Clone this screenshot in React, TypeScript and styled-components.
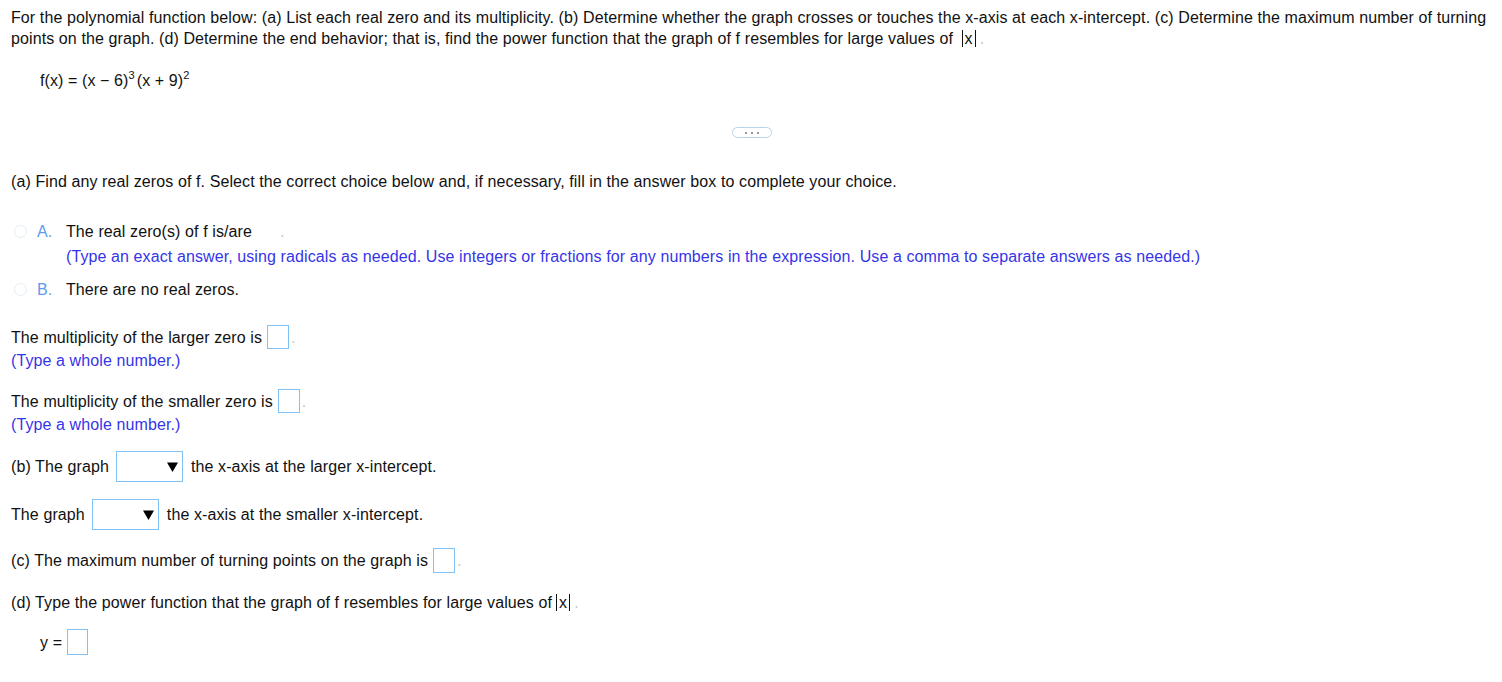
import styled, { createGlobalStyle } from "styled-components";

const GlobalStyle = createGlobalStyle`
  html, body {
    margin: 0;
    padding: 0;
    background: #fff;
  }
  body {
    font-family: "Liberation Sans", Arial, sans-serif;
    font-size: 16px;
    letter-spacing: 0.1px;
    color: #111;
  }
`;

const Page = styled.div`
  padding: 7px 11px 20px 11px;
  width: 1502px;
  box-sizing: border-box;
`;

const Intro = styled.p`
  margin: 0;
  line-height: 21px;
`;

const Row = styled.div<{ $mt: number; $indent?: number }>`
  display: flex;
  align-items: center;
  min-height: 21px;
  margin-top: ${(p) => p.$mt}px;
  padding-left: ${(p) => p.$indent ?? 0}px;
  line-height: 21px;
  white-space: nowrap;
`;

const Hint = styled(Row)`
  color: #3535e8;
`;

const Sup = styled.sup`
  font-size: 11px;
  line-height: 0;
  vertical-align: 7px;
  margin-right: 2px;
`;

const EllipsisRow = styled.div`
  display: flex;
  justify-content: center;
  margin-top: 36px;
`;

const EllipsisPill = styled.button`
  width: 40px;
  height: 11px;
  border: 1px solid #b9d3e8;
  border-radius: 6px;
  background: #fff;
  padding: 0;
  display: flex;
  align-items: center;
  justify-content: center;
  gap: 4px;
  margin-left: 2px;
`;

const Dot = styled.span`
  width: 2px;
  height: 2px;
  background: #9a9a9a;
`;

const Radio = styled.span`
  width: 11px;
  height: 11px;
  border: 1px solid #e3eef6;
  border-radius: 50%;
  margin-left: 3px;
  margin-right: 10px;
  flex: none;
`;

const Letter = styled.span`
  color: #5d9cf0;
  width: 29px;
`;

const AnswerBox = styled.span<{ $w?: number; $h?: number }>`
  display: inline-block;
  width: ${(p) => p.$w ?? 20}px;
  height: ${(p) => p.$h ?? 22}px;
  border: 1px solid #7fc0f5;
  margin-left: 5px;
  flex: none;
`;

const FaintDot = styled.span<{ $ml?: number }>`
  color: #c9c9a8;
  margin-left: ${(p) => p.$ml ?? 2}px;
`;

const Select = styled.span`
  display: inline-flex;
  align-items: center;
  justify-content: flex-end;
  box-sizing: border-box;
  width: 67px;
  height: 31px;
  border: 1px solid #7fc0f5;
  margin: 0 8px 0 7px;
  padding-right: 4px;
  flex: none;
`;

const Abs = styled.span`
  display: inline-block;
  border-left: 1px solid #111;
  border-right: 1px solid #111;
  padding: 0 2px;
  line-height: 17px;
  margin-left: 4px;
  margin-right: 2px;
`;

const Triangle = () => (
  <svg width="11" height="10" viewBox="0 0 11 10">
    <path d="M0 0.5 H11 L5.5 10 Z" fill="#000" />
  </svg>
);

export default function App() {
  return (
    <Page>
      <GlobalStyle />
      <Intro>
        For the polynomial function below: (a) List each real zero and its multiplicity. (b) Determine
        whether the graph crosses or touches the x-axis at each x-intercept. (c) Determine the maximum
        number of turning points on the graph. (d) Determine the end behavior; that is, find the power
        function that the graph of f resembles for large values of <Abs>x</Abs>
        <FaintDot>.</FaintDot>
      </Intro>

      <Row $mt={21} $indent={29}>
        <span>
          f(x) = (x − 6)<Sup>3</Sup>(x + 9)<Sup>2</Sup>
        </span>
      </Row>

      <EllipsisRow>
        <EllipsisPill aria-label="more">
          <Dot />
          <Dot />
          <Dot />
        </EllipsisPill>
      </EllipsisRow>

      <Row $mt={33}>
        (a) Find any real zeros of f. Select the correct choice below and, if necessary, fill in the
        answer box to complete your choice.
      </Row>

      <Row $mt={29}>
        <Radio />
        <Letter>A.</Letter>
        <span>The real zero(s) of f is/are</span>
        <FaintDot $ml={28}>.</FaintDot>
      </Row>
      <Hint $mt={4} $indent={55}>
        (Type an exact answer, using radicals as needed. Use integers or fractions for any numbers in
        the expression. Use a comma to separate answers as needed.)
      </Hint>

      <Row $mt={12}>
        <Radio />
        <Letter>B.</Letter>
        <span>There are no real zeros.</span>
      </Row>

      <Row $mt={25}>
        The multiplicity of the larger zero is
        <AnswerBox />
        <FaintDot>.</FaintDot>
      </Row>
      <Hint $mt={1}>(Type a whole number.)</Hint>

      <Row $mt={18}>
        The multiplicity of the smaller zero is
        <AnswerBox />
        <FaintDot>.</FaintDot>
      </Row>
      <Hint $mt={1}>(Type a whole number.)</Hint>

      <Row $mt={16}>
        (b) The graph
        <Select>
          <Triangle />
        </Select>
        the x-axis at the larger x-intercept.
      </Row>

      <Row $mt={17}>
        The graph
        <Select>
          <Triangle />
        </Select>
        the x-axis at the smaller x-intercept.
      </Row>

      <Row $mt={18}>
        (c) The maximum number of turning points on the graph is
        <AnswerBox $h={23} />
        <FaintDot>.</FaintDot>
      </Row>

      <Row $mt={19}>
        (d) Type the power function that the graph of f resembles for large values of
        <Abs>x</Abs>
        <FaintDot>.</FaintDot>
      </Row>

      <Row $mt={16} $indent={29}>
        y =
        <AnswerBox $w={19} $h={24} />
      </Row>
    </Page>
  );
}
